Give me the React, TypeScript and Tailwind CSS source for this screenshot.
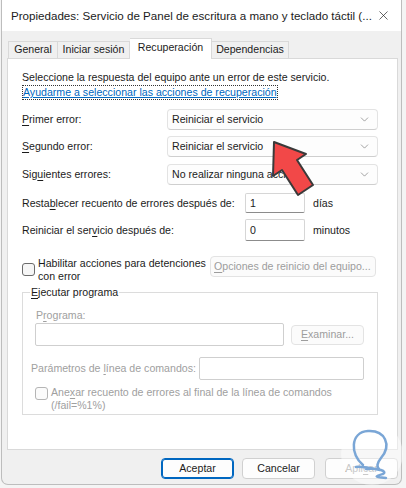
import { ChevronDown, X } from "lucide-react";

const font = { fontFamily: '"Liberation Sans", Arial, sans-serif' };

const U = ({ children }: { children: string }) => <span className="underline underline-offset-2">{children}</span>;

const Select = ({ value }: { value: string }) => (
  <div className="w-[211px] h-[21px] flex items-center justify-between pl-[4px] pr-[6px] bg-[#fdfdfd] border border-[#e3e3e3] border-b-[#cfcfcf] rounded-[4px]">
    <span>{value}</span>
    <ChevronDown size={13} strokeWidth={1} className="text-[#555]" />
  </div>
);

const TextBox = ({ value, h = "h-[20px]" }: { value: string; h?: string }) => (
  <div className={`w-[60px] ${h} flex items-center pl-[4px] bg-white border border-[#d6d6d6] border-b-[#8c8c8c] rounded-[2px]`}>
    {value}
  </div>
);

const Button = ({ children, primary, disabled }: { children: React.ReactNode; primary?: boolean; disabled?: boolean }) => (
  <div
    className={`w-[73px] h-[21px] flex items-center justify-center rounded-[4px] bg-[#fdfdfd] border ${
      primary ? "border-[#0067c0] ring-1 ring-[#0067c0] ring-inset" : "border-[#d0d0d0]"
    } ${disabled ? "text-[#9d9d9d]" : "text-[#1b1b1b]"}`}
  >
    {children}
  </div>
);

export default function App() {
  return (
    <div className="relative w-[406px] h-[488px] bg-[#f4f4f4] overflow-hidden text-[10.6px] text-[#1b1b1b] whitespace-nowrap" style={font}>
      <div className="ml-[1px] w-[401px] h-[485px] flex flex-col bg-[#f0f0f0] border border-t-0 border-[#bdbdbd] rounded-b-[7px] overflow-hidden">
        {/* title bar */}
        <div className="h-[31px] bg-white flex items-center justify-between pl-[9px] pr-[10px] text-[11.6px]">
          <span className="leading-none">Propiedades: Servicio de Panel de escritura a mano y teclado táctil (...</span>
          <X size={15} strokeWidth={1.1} className="text-[#222]" />
        </div>

        <div className="flex-1 pl-[5px] pr-[3px]">
          {/* tabs */}
          <div className="h-[27px] flex items-end pl-[1px] pt-[7px]">
            <div className="h-[17px] w-[50px] flex items-center justify-center border border-b-0 border-[#d9d9d9] bg-[#f0f0f0]">General</div>
            <div className="h-[17px] w-[72px] flex items-center justify-center border border-b-0 border-l-0 border-[#d9d9d9] bg-[#f0f0f0]">Iniciar sesión</div>
            <div className="h-[21px] w-[82px] -mb-[1px] pb-[3px] flex items-center justify-center border border-b-0 border-l-0 border-[#d9d9d9] bg-white relative z-10">
              Recuperación
            </div>
            <div className="h-[17px] w-[77px] flex items-center justify-center border border-b-0 border-l-0 border-[#d9d9d9] bg-[#f0f0f0]">Dependencias</div>
          </div>

          {/* panel */}
          <div className="h-[392px] bg-white border border-[#d9d9d9] pl-[14px] pr-[18px] pt-[11px] leading-[15px]">
            <div>Seleccione la respuesta del equipo ante un error de este servicio.</div>
            <span className="inline-block border border-dotted border-[#333] leading-[13px] text-[#0067c0] underline">
              Ayudarme a seleccionar las acciones de recuperación
            </span>

            <div className="mt-[9px] flex items-center">
              <span className="w-[145px]"><U>P</U>rimer error:</span>
              <Select value="Reiniciar el servicio" />
            </div>
            <div className="mt-[6px] flex items-center">
              <span className="w-[145px]"><U>S</U>egundo error:</span>
              <Select value="Reiniciar el servicio" />
            </div>
            <div className="mt-[7px] flex items-center">
              <span className="w-[145px]">Sig<U>u</U>ientes errores:</span>
              <Select value="No realizar ninguna acción" />
            </div>

            <div className="mt-[8px] flex items-center">
              <span className="w-[223px]">Resta<U>b</U>lecer recuento de errores después de:</span>
              <TextBox value="1" />
              <span className="ml-[8px]">días</span>
            </div>
            <div className="mt-[6px] flex items-center">
              <span className="w-[223px]">Reiniciar el ser<U>v</U>icio después de:</span>
              <TextBox value="0" h="h-[22px]" />
              <span className="ml-[8px]">minutos</span>
            </div>

            <div className="mt-[15px] flex items-start">
              <div className="mt-[7px] w-[13px] h-[13px] rounded-[3px] border border-[#6b6b6b] bg-[#f6f6f6] shrink-0" />
              <div className="ml-[3px] w-[172px] leading-[13px] mt-[1px]">
                Habilitar acciones para detenciones
                <br />
                con error
              </div>
              <div className="w-[166px] h-[21px] flex items-center pl-[3px] rounded-[4px] border border-[#e3e3e3] bg-[#fbfbfb] text-[#9d9d9d]">
                <U>O</U>pciones de reinicio del equipo...
              </div>
            </div>

            <fieldset className="mt-[2px] w-[356px] h-[130px] border border-[#dcdcdc]">
              <legend className="ml-[7px] px-[1px] leading-[15px]"><U>E</U>jecutar programa</legend>
              <div className="mt-[8px] pl-[13px] text-[#a0a0a0] leading-[14px]">P<U>r</U>ograma:</div>
              <div className="mt-[1px] pl-[12px] flex items-center gap-[7px]">
                <div className="w-[249px] h-[23px] border border-[#cfcfcf] rounded-[2px] bg-white" />
                <div className="w-[73px] h-[20px] flex items-center justify-center rounded-[4px] border border-[#e3e3e3] bg-[#fbfbfb] text-[#9d9d9d]">
                  <U>E</U>xaminar...
                </div>
              </div>
              <div className="mt-[11px] pl-[8px] pr-[13px] flex items-center text-[#a0a0a0]">
                <span className="flex-1">Parámetros de <U>l</U>ínea de comandos:</span>
                <div className="w-[165px] h-[23px] border border-[#cfcfcf] rounded-[2px] bg-white" />
              </div>
              <div className="mt-[6px] pl-[12px] flex items-start text-[#a0a0a0]">
                <div className="mt-[1px] w-[13px] h-[13px] rounded-[3px] border border-[#b5b5b5] bg-[#fbfbfb] shrink-0" />
                <div className="ml-[3px] leading-[13px]">
                  Ane<U>x</U>ar recuento de errores al final de la línea de comandos
                  <br />
                  (/fail=%1%)
                </div>
              </div>
            </fieldset>
          </div>

          {/* buttons */}
          <div className="mt-[8px] flex justify-end gap-[8px]">
            <Button primary>Aceptar</Button>
            <Button>Cancelar</Button>
            <div className="ml-[2px]">
              <Button disabled>
                <span>
                  Apli<U>c</U>ar
                </span>
              </Button>
            </div>
          </div>
        </div>
      </div>

      {/* overlay: red arrow + watermark */}
      <svg className="absolute inset-0 pointer-events-none" width="406" height="488" viewBox="0 0 406 488">
        <polygon
          points="274,142 306,154 297,160 313,185 298,195 282,170 273,176"
          fill="#f24848"
          stroke="#3a3a3a"
          strokeWidth="2"
          strokeLinejoin="round"
        />
        <circle cx="372" cy="454" r="31" fill="#ffffff" opacity="0.45" />
        <path
          d="M363 465 C350 455 350 432 368 431 C385 430 392 445 381 458 C377 463 376 467 380 470 C370 468 360 466 356 467 M366 469 C378 468 388 471 383 474 C376 476 372 477 386 478"
          fill="none"
          stroke="#7aa6d6"
          strokeWidth="2.5"
          strokeLinecap="round"
        />
      </svg>
    </div>
  );
}
